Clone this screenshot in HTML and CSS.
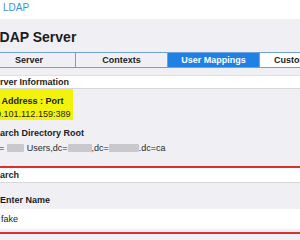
FILE: index.html
```html
<!DOCTYPE html>
<html>
<head>
<meta charset="UTF-8">
<link rel="stylesheet" href="styles.css">
<title>LDAP Server</title>
</head>
<body>
<div class="page">
    <div class="topbar"><a class="back" href="#">LDAP</a></div>

    <h1 class="title">LDAP Server</h1>

    <!-- tab strip -->
    <div class="tabs">
        <div class="tab">Server</div>
        <div class="tab">Contexts</div>
        <div class="tab active">User Mappings</div>
        <div class="tab plain">Custom Filters</div>
    </div>

    <div class="section-head">Server Information</div>

    <div class="field highlight">
        <div class="label">IP Address : Port</div>
        <div class="value">10.101.112.159:389</div>
    </div>

    <div class="field dir">
        <div class="label">Search Directory Root</div>
        <div class="value">ou=<span class="blur b1"></span> Users,dc=<span class="blur b2"></span>,dc=<span class="blur b3"></span>.dc=ca</div>
    </div>

    <!-- search box -->
    <div class="search">
        <div class="section-head inner">Search</div>
        <div class="input-label">Enter Name</div>
        <div class="input-row">
            <div class="input">fake</div>
        </div>
    </div>
</div>
</body>
</html>
```

FILE: styles.css
```css
*{
    box-sizing: border-box;
}
html, body{
    margin: 0;
    overflow: hidden;
}
body{
    background: #efeff4;
    font-family: "Liberation Sans", Arial, sans-serif;
    color: #1c1c1e;
}
.page{
    width: 380px;
    margin-left: -11px;
}
.topbar{
    height: 19px;
    background: #fff;
    padding-left: 14px;
    font-size: 10px;
    line-height: 16px;
}
.back{
    color: #3f8fdc;
    text-decoration: none;
}
.title{
    margin: 0;
    padding: 10px 0 0 2px;
    font-size: 14px;
    line-height: 17px;
    font-weight: bold;
}
.tabs{
    display: flex;
    width: fit-content;
    height: 16px;
    margin: 6px 0 0 -7px;
    border: 1px solid #6fa3d8;
}
.tab{
    width: 92px;
    font-size: 9px;
    font-weight: bold;
    line-height: 14px;
    text-align: center;
    white-space: nowrap;
    border-left: 1px solid #6fa3d8;
}
.tab:first-child{
    border-left: none;
}
.tab.active{
    background: #1f80e6;
    color: #fff;
}
.tab.plain{
    background: #fff;
}
.section-head{
    margin-top: 7px;
    background: #fff;
    border-top: 1px solid #dedee3;
    border-bottom: 1px solid #d6d6db;
    font-size: 9px;
    font-weight: bold;
    line-height: 12px;
}
.field{
    font-size: 9px;
}
.field .label{
    font-weight: bold;
    line-height: 13px;
}
.highlight{
    width: 84px;
    padding: 6px 0 0 2px;
    background: #f2f20a;
}
.highlight .value{
    line-height: 12px;
}
.dir{
    margin-top: 7px;
}
.dir .value{
    margin-top: 1px;
    line-height: 14px;
    color: #2a2a2a;
}
.blur{
    display: inline-block;
    height: 8px;
    vertical-align: -1px;
    background: #c8c8cd;
    border-radius: 1px;
}
.b1{
    width: 17px;
    margin-left: 3px;
}
.b2{
    width: 24px;
}
.b3{
    width: 30px;
}
.search{
    margin: 11px -4px 0;
    padding-bottom: 3px;
    border: 2px solid #dc2f2f;
}
.section-head.inner{
    margin-top: 0;
    border-top: none;
    padding-left: 2px;
    line-height: 14px;
}
.input-label{
    padding: 11px 0 2px 13px;
    font-size: 9px;
    font-weight: bold;
    line-height: 13px;
}
.input-row{
    background: #fff;
}
.input{
    padding-left: 14px;
    font-size: 9px;
    line-height: 20px;
}
```
